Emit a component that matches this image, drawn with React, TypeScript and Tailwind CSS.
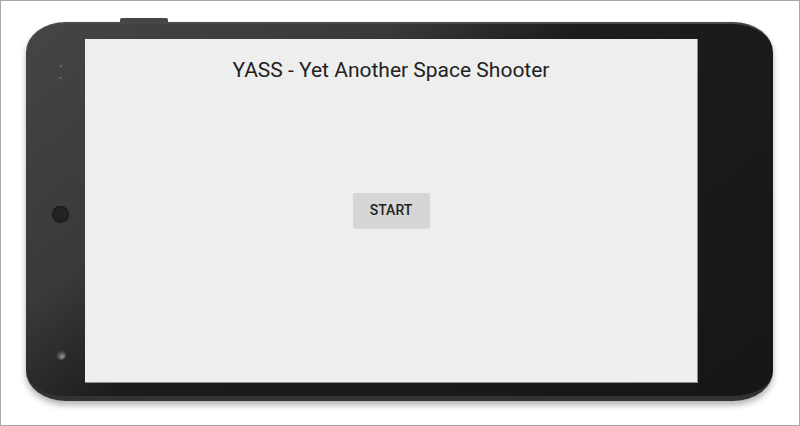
import React from 'react';

const Bezel: React.FC = () => {
  return (
    <div className="w-[59px] shrink-0 flex flex-col items-center pl-[10px] pt-[41px] pb-[36px]">
      {/* sensors */}
      <div className="flex flex-col items-center gap-[10px]">
        <span className="w-[2px] h-[2px] bg-[#6a6a6a]" />
        <span className="w-[3px] h-[2px] bg-[#5e5e5e]" />
      </div>
      <div className="flex-1 flex items-center">
        <span className="w-[17px] h-[17px] rounded-full bg-[#232323] shadow-[inset_0_0_2px_rgba(0,0,0,0.8)]" />
      </div>
      <span className="w-[10px] h-[10px] rounded-full bg-[radial-gradient(circle_at_60%_65%,#9a9a9a_0%,#555_35%,#2a2a2a_75%)]" />
    </div>
  );
};

export default function App() {
  return (
    <div className="w-[800px] h-[426px] bg-white border border-[#a8a8a8] pl-[25px] pt-[21px] overflow-hidden" style={{ fontFamily: 'Roboto, "Noto Sans", sans-serif' }}>
      <div className="relative w-[747px] h-[379px] rounded-[40px/30px] bg-[linear-gradient(142deg,#454545_0%,#393939_30%,#1c1c1c_46%,#161616_100%)] border-t-2 border-t-[#4a4a4a] border-b-[5px] border-b-[#333] shadow-[0_4px_6px_rgba(0,0,0,0.3)] flex">
        {/* volume / power button */}
        <span className="absolute left-[94px] -top-[6px] w-[48px] h-[5px] rounded-t-[2px] bg-[#454545]" />
        <Bezel />
        <div className="mt-[15px] mb-[13px] w-[613px] bg-[#eeeeee] border-r border-b border-[#8f8f8f] flex flex-col items-center">
          <h1 className="pt-[17px] text-[21px] leading-[28px] text-[#222]">YASS - Yet Another Space Shooter</h1>
          <div className="flex-1 flex items-center pb-[45px]">
            <button className="h-[35px] w-[77px] rounded-[2px] bg-[#d6d6d6] text-[14px] font-medium text-[#222] shadow-[0_1px_1px_rgba(0,0,0,0.08)]">
              START
            </button>
          </div>
        </div>
      </div>
    </div>
  );
}
